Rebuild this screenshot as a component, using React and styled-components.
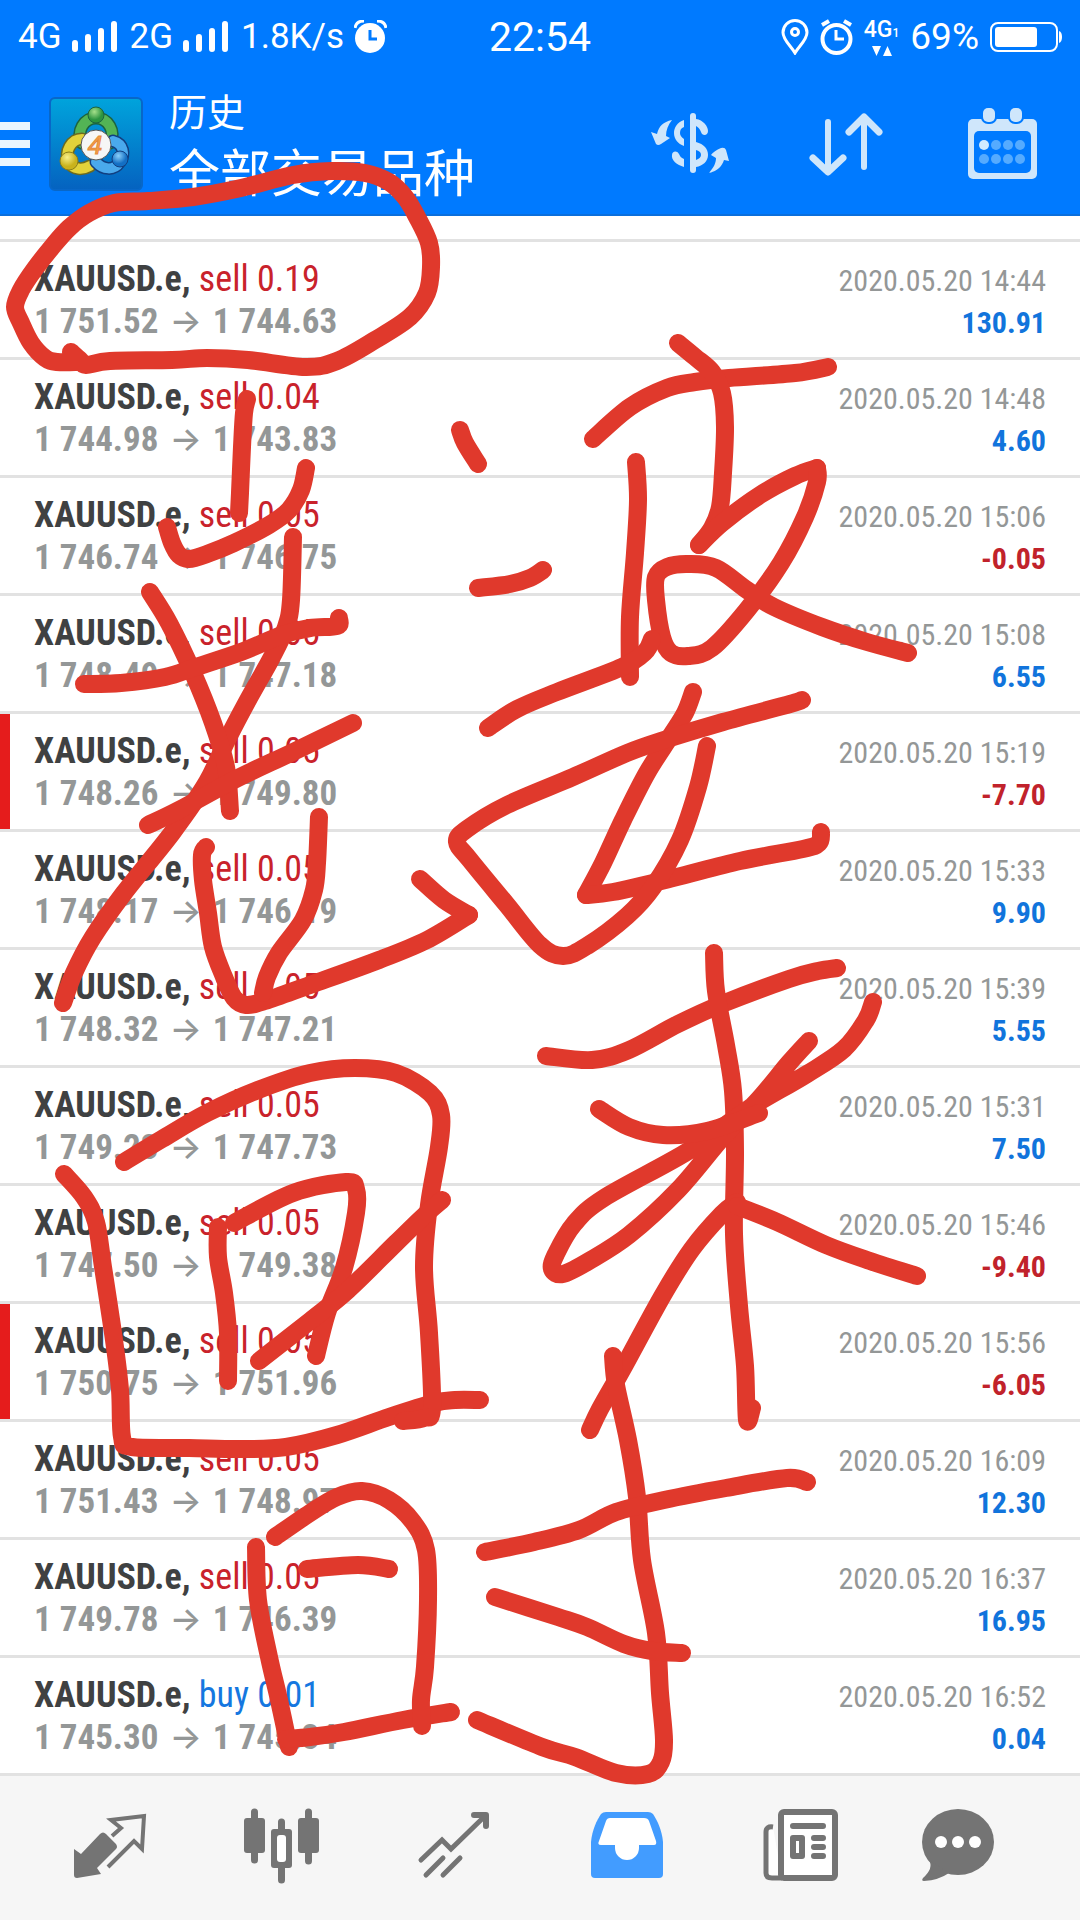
import styled, { createGlobalStyle } from "styled-components"

const GlobalStyle = createGlobalStyle`
  *{
    box-sizing:border-box;
  }
  body{
    margin:0;
    background:#fff;
    font-family:"Roboto Condensed","Liberation Sans Narrow",Roboto,"Noto Sans CJK SC",sans-serif;
  }
  button{
    padding:0;
    border:0;
    background:none;
    font:inherit;
    color:inherit;
  }
  svg{
    display:block;
  }
`

const Page = styled.div`
  position:relative;
  display:flex;
  flex-direction:column;
  min-height:100vh;
`

const Header = styled.header`
  background:#007aff;
  color:#fff;
  border-bottom:2px solid #0b6fdc;
`

const StatusBar = styled.div`
  display:grid;
  grid-template-columns:1fr auto 1fr;
  align-items:center;
  height:70px;
  padding:4px 18px 0;
  font-family:Roboto,sans-serif;
  font-size:35px;
  line-height:40px;
`
const StatusGroup = styled.div`
  display:flex;
  align-items:center;
  justify-content:${(props) => (props.$end ? "flex-end" : "flex-start")};
  gap:${(props) => (props.$end ? "11px" : "10px")};
`
const Clock = styled.time`
  font-size:41px;
`
const Charge = styled.span`
  font-size:37px;
`
const SignalBars = styled.svg`
  margin-right:2px;
`
const DataMode = styled.div`
  display:flex;
  flex-direction:column;
  align-items:center;
  gap:2px;
  font-size:23px;
  font-weight:500;
  line-height:22px;
  small{
    font-size:12px;
  }
`

const TitleBar = styled.div`
  display:flex;
  align-items:center;
  height:144px;
  padding-top:4px;
`
const MenuButton = styled.button`
  display:flex;
  flex-direction:column;
  gap:10px;
  width:30px;
  margin-right:19px;
  span{
    height:8px;
    background:#eaf6ff;
  }
`
const Titles = styled.div`
  flex:1;
  margin-left:26px;
  font-family:"Noto Sans CJK SC",sans-serif;
`
const Title = styled.div`
  font-size:38px;
  line-height:52px;
`
const SubTitle = styled.div`
  font-size:51px;
  line-height:68px;
`
const Action = styled.button`
  display:flex;
  justify-content:center;
  width:156px;
`

const DealList = styled.ul`
  margin:23px 0 0;
  padding:0;
  list-style:none;
`
const StyledDeal = styled.li`
  display:grid;
  grid-template-columns:1fr auto;
  align-content:start;
  align-items:baseline;
  height:118px;
  padding:17px 34px 0;
  border-top:3px solid #e2e2e2;
  box-shadow:${(props) => (props.$marked ? "inset 10px 0 #e51c1c" : "none")};
  line-height:41px;
`
const Symbol = styled.div`
  color:#3f4142;
  font-size:36px;
  font-weight:700;
  span{
    color:${(props) => (props.$buy ? "#1577e0" : "#c9222b")};
    font-weight:400;
  }
`
const Prices = styled.div`
  color:#949797;
  font-size:35px;
  font-weight:700;
  span{
    margin:0 11px;
    font-family:Inter,sans-serif;
    font-size:34px;
    font-weight:500;
    line-height:20px;
  }
`
const DealTime = styled.time`
  color:#949797;
  font-size:30px;
`
const Profit = styled.div`
  color:${(props) => (props.$loss ? "#c1222b" : "#1174dc")};
  font-size:30px;
  font-weight:700;
  text-align:right;
`

const Nav = styled.nav`
  display:flex;
  align-items:center;
  height:147px;
  margin-top:auto;
  padding:0 24px;
  border-top:3px solid #e2e2e2;
  background:#f6f6f6;
`
const NavButton = styled.button`
  display:flex;
  flex:1;
  justify-content:center;
  color:${(props) => (props.$active ? "#429cff" : "#747474")};
`

const Ink = styled.svg`
  position:absolute;
  top:0;
  left:0;
  width:100%;
  pointer-events:none;
`

const Signal = () => (
  <SignalBars width="46" height="34" viewBox="0 0 46 34" stroke="#fff" strokeWidth="6" strokeLinecap="round">
    <path d="M3 23V29M16 17V29M29 11V29M42 4V29" />
  </SignalBars>
)

const AlarmSolid = () => (
  <svg width="33" height="34" viewBox="0 0 33 34">
    <path d="M1 8Q2 1 10 1M32 8Q31 1 23 1" fill="none" stroke="#fff" strokeWidth="3" />
    <circle cx="16" cy="18" r="15" fill="#fff" />
    <path d="M16 10V19H23" fill="none" stroke="#007aff" strokeWidth="3" />
  </svg>
)

const Pin = () => (
  <svg width="28" height="36" viewBox="0 0 28 36" fill="none" stroke="#fff" strokeWidth="3">
    <path d="M14 34C10 27 2 21 2 13.500A12 12 0 0 1 26 13.500C26 21 18 27 14 34Z" />
    <circle cx="14" cy="13" r="3.500" />
  </svg>
)

const Alarm = () => (
  <svg width="33" height="36" viewBox="0 0 33 36" fill="none" stroke="#fff" strokeWidth="4">
    <circle cx="16.500" cy="20" r="14" />
    <path d="M16 11V20H24" strokeWidth="3" />
    <path d="M2 6L9 2M31 6L24 2" />
  </svg>
)

const Battery = () => (
  <svg width="72" height="32" viewBox="0 0 72 32">
    <rect x="1" y="2" width="66" height="28" rx="7" fill="none" stroke="#fff" strokeWidth="2" />
    <rect x="5" y="6" width="42" height="20" rx="3" fill="#fff" />
    <path d="M69 10Q72 11 72 16T69 22Z" fill="#fff" />
  </svg>
)

const Logo = () => (
  <svg width="94" height="94" viewBox="0 0 94 94">
    <defs>
      <linearGradient id="sky" x1="0" y1="0" x2="0" y2="1">
        <stop offset="0" stopColor="#00a4dc" />
        <stop offset="1" stopColor="#0562c0" />
      </linearGradient>
      <radialGradient id="green" cx=".4" cy=".3"><stop offset="0" stopColor="#a5e08a" /><stop offset="1" stopColor="#2c9440" /></radialGradient>
      <radialGradient id="yellow" cx=".4" cy=".3"><stop offset="0" stopColor="#f8f08a" /><stop offset="1" stopColor="#c9b21c" /></radialGradient>
      <radialGradient id="blue" cx=".4" cy=".3"><stop offset="0" stopColor="#8bd0fa" /><stop offset="1" stopColor="#136fc4" /></radialGradient>
    </defs>
    <rect x="1" y="1" width="92" height="92" rx="5" fill="url(#sky)" stroke="#0867c8" strokeWidth="2" />
    <g fill="none" strokeLinecap="round">
      <path d="M33 46C27 34 35 21 47 21S67 34 61 46" stroke="#1c6340" strokeWidth="13" />
      <path d="M33 46C27 34 35 21 47 21S67 34 61 46" stroke="#53b455" strokeWidth="10" />
      <path d="M33 42C22 42 15 55 20 65C24 73 34 73 41 69" stroke="#6b6a20" strokeWidth="13" />
      <path d="M33 42C22 42 15 55 20 65C24 73 34 73 41 69" stroke="#e2d23a" strokeWidth="10" />
      <path d="M64 44C75 47 76 57 71 65C65 74 54 73 47 65" stroke="#123f80" strokeWidth="13" />
      <path d="M64 44C75 47 76 57 71 65C65 74 54 73 47 65" stroke="#4aa9ec" strokeWidth="10" />
    </g>
    <circle cx="47" cy="18" r="8" fill="url(#green)" stroke="#1c6340" />
    <circle cx="20" cy="64" r="9" fill="url(#yellow)" stroke="#8a7e1c" />
    <circle cx="71" cy="62" r="8" fill="url(#blue)" stroke="#123f80" />
    <circle cx="47" cy="48" r="15" fill="#f6f6f6" stroke="#555" />
    <text x="46" y="57" textAnchor="middle" fontFamily="Liberation Sans, sans-serif" fontSize="26" fontStyle="italic" fill="#f7a047" stroke="#e5893a">4</text>
  </svg>
)

const SymbolIcon = () => (
  <svg width="80" height="80" viewBox="0 0 80 80" fill="#cfe6fb">
    <path d="M34 16C27 18 24 24 24 29C24 35 28 40 34 42V35C31 33 30 31 30 29C30 26 31 24 34 23Z" />
    <path d="M22 51C21 56 27 61 34 63V55C31 54 30 52 29 50C27 46 22 47 22 51Z" />
    <path d="M46 15C53 16 58 22 58 27C58 32 52 32 51 28C50 25 48 23 46 22Z" />
    <path d="M46 38C54 40 58 45 58 51C58 57 53 62 46 63V56C49 55 51 53 51 51C51 48 49 47 46 46Z" />
    <path d="M22 16C13 18 9 22 7 30L1 28L6 40Q8 42 11 40L20 34L16 32C16 26 18 21 22 16Z" />
    <path d="M59 69C64 63 66 59 66 54L61 51Q64 47 71 44Q75 43 76 46L79 57L74 56C72 62 68 67 59 69Z" />
    <path d="M43 12V66" stroke="#cfe6fb" strokeWidth="6" strokeLinecap="round" />
  </svg>
)

const SortIcon = () => (
  <svg width="80" height="80" viewBox="0 0 80 80" fill="none" stroke="#cfe6fb" strokeWidth="6" strokeLinecap="round" strokeLinejoin="round">
    <path d="M22 18V67M58 14V63" />
    <path d="M7 54L22 68L37 54M43 28L58 13L73 28" strokeWidth="7" />
  </svg>
)

const CalendarIcon = () => (
  <svg width="80" height="80" viewBox="0 0 80 80">
    <rect x="6" y="15" width="69" height="60" rx="5" fill="#cfe6fb" />
    <rect x="12" y="27" width="57" height="42" rx="5" fill="#007aff" />
    <rect x="19" y="2" width="16" height="18" rx="7" fill="#007aff" />
    <rect x="46" y="2" width="16" height="18" rx="7" fill="#007aff" />
    <rect x="21" y="4" width="12" height="14" rx="5" fill="#cfe6fb" />
    <rect x="48" y="4" width="12" height="14" rx="5" fill="#cfe6fb" />
    {[41, 55].map((y) => [22, 34, 46, 58].map((x) => (
      <circle key={x + "-" + y} cx={x} cy={y} r="5" fill={x === 22 && y === 41 ? "#cfeaff" : "#55abff"} />
    )))}
  </svg>
)

const NavIcon = ({ children }) => (
  <svg width="100" height="80" viewBox="0 0 100 80" fill="currentColor">{children}</svg>
)

const QuotesIcon = () => (
  <NavIcon>
    <path d="M14 41L21 46L40 26Q43 23 46 26L56 36Q58 39 56 41L37 60L41 66L17 70Q14 70 14 67Z" />
    <path d="M52 28L61 20L51 12L84 8L82 41L74 33L48 59" fill="none" stroke="currentColor" strokeWidth="4" />
  </NavIcon>
)

const ChartIcon = () => (
  <NavIcon>
    <path d="M22.500 4V52M49.500 14V72M76.500 4V53" stroke="currentColor" strokeWidth="7" strokeLinecap="round" />
    <rect x="12" y="10" width="21" height="35" rx="3" />
    <rect x="66" y="10" width="21" height="35" rx="3" />
    <rect x="39" y="21" width="21" height="39" rx="3" />
    <rect x="45" y="27" width="9" height="27" rx="3" fill="#fff" />
  </NavIcon>
)

const TradeIcon = () => (
  <NavIcon>
    <g fill="none" stroke="currentColor" strokeWidth="6" strokeLinecap="round">
      <path d="M17 52L38 32L47 41L81 8M22 67L39 50M39 67L56 50" strokeWidth="5" />
      <path d="M70 7H82V18" strokeLinejoin="round" />
    </g>
  </NavIcon>
)

const HistoryIcon = () => (
  <NavIcon>
    <path d="M15 34C16 22 21 12 25 6Q27 4 30 4H72Q75 4 77 6C81 12 86 22 87 34V66Q87 70 83 70H19Q15 70 15 66Z" />
    <path d="M34 10H68Q72 10 73 13L80 33Q81 37 78 37H63V40A12 12 0 0 1 39 40V37H25Q21 37 23 33L30 13Q31 10 34 10Z" fill="#fff" />
  </NavIcon>
)

const NewsIcon = () => (
  <NavIcon>
    <path d="M25 19Q18 18 18 24V65Q18 70 24 70H34" fill="#fff" stroke="currentColor" strokeWidth="5" />
    <rect x="33" y="4" width="54" height="66" rx="3" fill="#fff" stroke="currentColor" strokeWidth="6" />
    <path d="M45 18H75M66 30H75M66 39H75M66 48H75" stroke="currentColor" strokeWidth="6" strokeLinecap="round" />
    <rect x="42" y="27" width="15" height="24" rx="3" />
    <rect x="48" y="33" width="3" height="12" fill="#fff" />
  </NavIcon>
)

const MessagesIcon = () => (
  <NavIcon>
    <ellipse cx="38" cy="34" rx="36" ry="33" />
    <path d="M9 52Q14 60 3 70Q1 73 4 73Q19 72 29 65Z" />
    <circle cx="21" cy="34" r="6" fill="#fff" />
    <circle cx="38" cy="34" r="6" fill="#fff" />
    <circle cx="55" cy="34" r="6" fill="#fff" />
  </NavIcon>
)

// freehand marks over the list, each one is a run of points
const strokes = [
  [[71, 352], [80, 360], [86, 365], [110, 361], [172, 360], [207, 358], [248, 360], [305, 367], [337, 361], [375, 340], [410, 317], [427, 293], [431, 267], [429, 243], [417, 217], [405, 197], [389, 182], [365, 173], [331, 171], [293, 175], [241, 188], [193, 197], [148, 201], [114, 203], [89, 213], [69, 228], [52, 247], [34, 270], [21, 290], [15, 307], [21, 323], [31, 343], [45, 358], [57, 362], [80, 362]],
  [[247, 399], [244, 413], [242, 447], [240, 493], [239, 513]],
  [[167, 527], [172, 543], [179, 555], [189, 559], [207, 554], [234, 543], [269, 525], [289, 510], [301, 490], [306, 468]],
  [[460, 430], [465, 443], [478, 464]],
  [[478, 588], [510, 584], [530, 578], [543, 570]],
  [[293, 537], [291, 600], [286, 627], [272, 657], [248, 700], [227, 740], [207, 782], [172, 833], [124, 893], [93, 937], [74, 973], [63, 1003]],
  [[150, 592], [169, 623], [193, 673], [213, 723], [226, 767], [230, 811]],
  [[84, 684], [121, 683], [165, 677], [196, 667], [241, 652], [282, 635], [310, 628], [337, 626], [339, 618]],
  [[148, 825], [179, 810], [234, 780], [293, 752], [353, 723]],
  [[206, 847], [202, 855], [203, 880], [208, 913], [213, 947], [224, 977], [234, 998], [246, 1005], [265, 1001], [310, 985], [379, 960], [427, 940], [469, 915]],
  [[469, 915], [444, 900], [420, 879]],
  [[319, 817], [317, 863], [314, 890], [303, 920], [279, 953], [267, 977], [263, 993]],
  [[593, 439], [630, 407], [667, 388], [695, 382], [729, 378], [795, 373], [828, 367]],
  [[678, 343], [695, 357], [712, 372], [722, 393], [725, 427], [723, 473], [720, 507], [712, 528], [699, 545]],
  [[699, 545], [722, 523], [760, 495], [795, 476], [817, 468]],
  [[817, 468], [817, 482], [805, 517], [781, 563], [747, 610], [712, 648], [688, 656], [671, 653], [662, 637], [656, 600], [656, 577], [667, 567], [688, 564], [716, 568], [747, 590], [774, 607], [822, 627], [867, 642], [908, 653]],
  [[636, 462], [638, 500], [635, 553], [630, 617], [630, 677]],
  [[652, 639], [645, 652], [622, 667], [557, 692], [517, 709], [488, 728]],
  [[693, 692], [685, 713], [670, 737], [647, 773], [623, 820], [603, 863], [586, 895]],
  [[586, 895], [613, 892], [673, 878], [740, 861], [803, 849], [819, 843], [821, 832]],
  [[802, 700], [790, 704], [723, 722], [667, 739], [627, 753], [573, 777], [507, 805], [467, 829], [457, 842], [470, 860], [507, 905], [540, 945], [563, 956], [587, 946], [627, 916], [653, 887], [680, 840], [698, 787], [707, 746]],
  [[546, 1056], [592, 1060], [629, 1050], [678, 1024], [722, 1004], [789, 979], [818, 971], [837, 968]],
  [[714, 953], [716, 991], [726, 1045], [733, 1091], [735, 1152], [734, 1234], [739, 1306], [745, 1366], [747, 1420], [752, 1408]],
  [[873, 1002], [866, 1020], [844, 1049], [807, 1074], [759, 1102], [737, 1117], [685, 1153], [604, 1198], [574, 1224], [556, 1254], [552, 1269], [563, 1274], [589, 1261], [629, 1235], [678, 1190], [722, 1138], [759, 1099], [789, 1063], [809, 1041]],
  [[599, 1109], [629, 1127], [663, 1135], [707, 1131], [759, 1113]],
  [[737, 1202], [722, 1214], [692, 1249], [663, 1295], [622, 1370], [600, 1409], [590, 1430]],
  [[737, 1206], [777, 1222], [826, 1245], [870, 1261], [917, 1276]],
  [[64, 1174], [84, 1197], [96, 1222], [103, 1267], [114, 1340], [120, 1390], [122, 1437], [132, 1447], [189, 1448], [241, 1449], [286, 1447], [337, 1435], [389, 1417], [434, 1403], [455, 1400], [480, 1400]],
  [[124, 1162], [162, 1139], [207, 1113], [258, 1090], [310, 1073], [355, 1068], [396, 1073], [430, 1093], [441, 1115], [439, 1147], [429, 1205], [424, 1267], [429, 1333], [432, 1408], [424, 1418], [403, 1421]],
  [[218, 1227], [218, 1257], [224, 1293], [228, 1333], [228, 1381]],
  [[234, 1223], [293, 1193], [346, 1182], [356, 1189], [356, 1213], [344, 1268], [327, 1313], [316, 1356]],
  [[259, 1361], [310, 1321], [348, 1290], [396, 1243], [427, 1213], [442, 1200]],
  [[256, 1547], [258, 1600], [269, 1657], [279, 1700], [289, 1747]],
  [[286, 1739], [310, 1737], [344, 1732], [403, 1720], [451, 1712]],
  [[275, 1537], [310, 1513], [337, 1497], [362, 1491], [389, 1500], [413, 1522], [426, 1550], [428, 1600], [425, 1667], [421, 1700], [422, 1726]],
  [[307, 1569], [358, 1565], [389, 1569]],
  [[613, 1356], [616, 1385], [628, 1440], [637, 1497], [642, 1560], [656, 1633], [660, 1693], [664, 1740], [661, 1762], [648, 1774], [616, 1773], [575, 1757], [542, 1747], [477, 1720]],
  [[485, 1552], [534, 1542], [579, 1530], [616, 1512], [664, 1500], [726, 1488], [787, 1478], [807, 1482]],
  [[495, 1597], [558, 1617], [587, 1627], [624, 1644], [652, 1651], [682, 1653]],
]

// runs a smooth curve through every point of a stroke
const toPath = (points) => {
  let d = `M${points[0]}`
  for (let i = 0; i < points.length - 1; i++) {
    const before = points[i - 1] || points[i]
    const from = points[i]
    const to = points[i + 1]
    const after = points[i + 2] || to
    const c1 = [from[0] + (to[0] - before[0]) / 6, from[1] + (to[1] - before[1]) / 6]
    const c2 = [to[0] - (after[0] - from[0]) / 6, to[1] - (after[1] - from[1]) / 6]
    d += `C${c1} ${c2} ${to}`
  }
  return d
}

const deals = [
  { type: "sell", volume: "0.19", open: "1 751.52", close: "1 744.63", time: "14:44", profit: "130.91" },
  { type: "sell", volume: "0.04", open: "1 744.98", close: "1 743.83", time: "14:48", profit: "4.60" },
  { type: "sell", volume: "0.05", open: "1 746.74", close: "1 746.75", time: "15:06", profit: "-0.05" },
  { type: "sell", volume: "0.05", open: "1 748.49", close: "1 747.18", time: "15:08", profit: "6.55" },
  { type: "sell", volume: "0.05", open: "1 748.26", close: "1 749.80", time: "15:19", profit: "-7.70", marked: true },
  { type: "sell", volume: "0.05", open: "1 748.17", close: "1 746.19", time: "15:33", profit: "9.90" },
  { type: "sell", volume: "0.05", open: "1 748.32", close: "1 747.21", time: "15:39", profit: "5.55" },
  { type: "sell", volume: "0.05", open: "1 749.23", close: "1 747.73", time: "15:31", profit: "7.50" },
  { type: "sell", volume: "0.05", open: "1 747.50", close: "1 749.38", time: "15:46", profit: "-9.40" },
  { type: "sell", volume: "0.05", open: "1 750.75", close: "1 751.96", time: "15:56", profit: "-6.05", marked: true },
  { type: "sell", volume: "0.05", open: "1 751.43", close: "1 748.97", time: "16:09", profit: "12.30" },
  { type: "sell", volume: "0.05", open: "1 749.78", close: "1 746.39", time: "16:37", profit: "16.95" },
  { type: "buy", volume: "0.01", open: "1 745.30", close: "1 745.34", time: "16:52", profit: "0.04" },
]

const Deal = (props) => {
  const { deal } = props
  return (
    <StyledDeal $marked={deal.marked}>
      <Symbol $buy={deal.type === "buy"}>XAUUSD.e, <span>{deal.type} {deal.volume}</span></Symbol>
      <DealTime>2020.05.20 {deal.time}</DealTime>
      <Prices>{deal.open}<span>→</span>{deal.close}</Prices>
      <Profit $loss={deal.profit.startsWith("-")}>{deal.profit}</Profit>
    </StyledDeal>
  )
}

const tabs = [
  { label: "行情", Icon: QuotesIcon },
  { label: "图表", Icon: ChartIcon },
  { label: "交易", Icon: TradeIcon },
  { label: "历史", Icon: HistoryIcon, active: true },
  { label: "新闻", Icon: NewsIcon },
  { label: "消息", Icon: MessagesIcon },
]

const App = () => {
  return (
    <Page>
      <GlobalStyle />
      <Header>
        <StatusBar>
          <StatusGroup>
            <span>4G</span>
            <Signal />
            <span>2G</span>
            <Signal />
            <span>1.8K/s</span>
            <AlarmSolid />
          </StatusGroup>
          <Clock>22:54</Clock>
          <StatusGroup $end>
            <Pin />
            <Alarm />
            <DataMode>
              <span>4G<small>1</small></span>
              <svg width="20" height="10" viewBox="0 0 20 10" fill="#fff">
                <path d="M0 0H9L4.500 10ZM11 10H20L15.500 0Z" />
              </svg>
            </DataMode>
            <Charge>69%</Charge>
            <Battery />
          </StatusGroup>
        </StatusBar>
        <TitleBar>
          <MenuButton aria-label="菜单"><span /><span /><span /></MenuButton>
          <Logo />
          <Titles>
            <Title>历史</Title>
            <SubTitle>全部交易品种</SubTitle>
          </Titles>
          <Action aria-label="交易品种"><SymbolIcon /></Action>
          <Action aria-label="排序"><SortIcon /></Action>
          <Action aria-label="日期"><CalendarIcon /></Action>
        </TitleBar>
      </Header>
      <DealList>
        {
          deals.map((deal) => {
            return (
              <Deal key={deal.time} deal={deal} />
            )
          })
        }
      </DealList>
      <Nav>
        {
          tabs.map(({ label, Icon, active }) => {
            return (
              <NavButton key={label} aria-label={label} $active={active}><Icon /></NavButton>
            )
          })
        }
      </Nav>
      <Ink viewBox="0 0 1080 1920" fill="none" stroke="#e0392c" strokeWidth="18" strokeLinecap="round" strokeLinejoin="round" aria-hidden="true">
        {strokes.map((points, i) => <path key={i} d={toPath(points)} />)}
      </Ink>
    </Page>
  )
}
export default App
